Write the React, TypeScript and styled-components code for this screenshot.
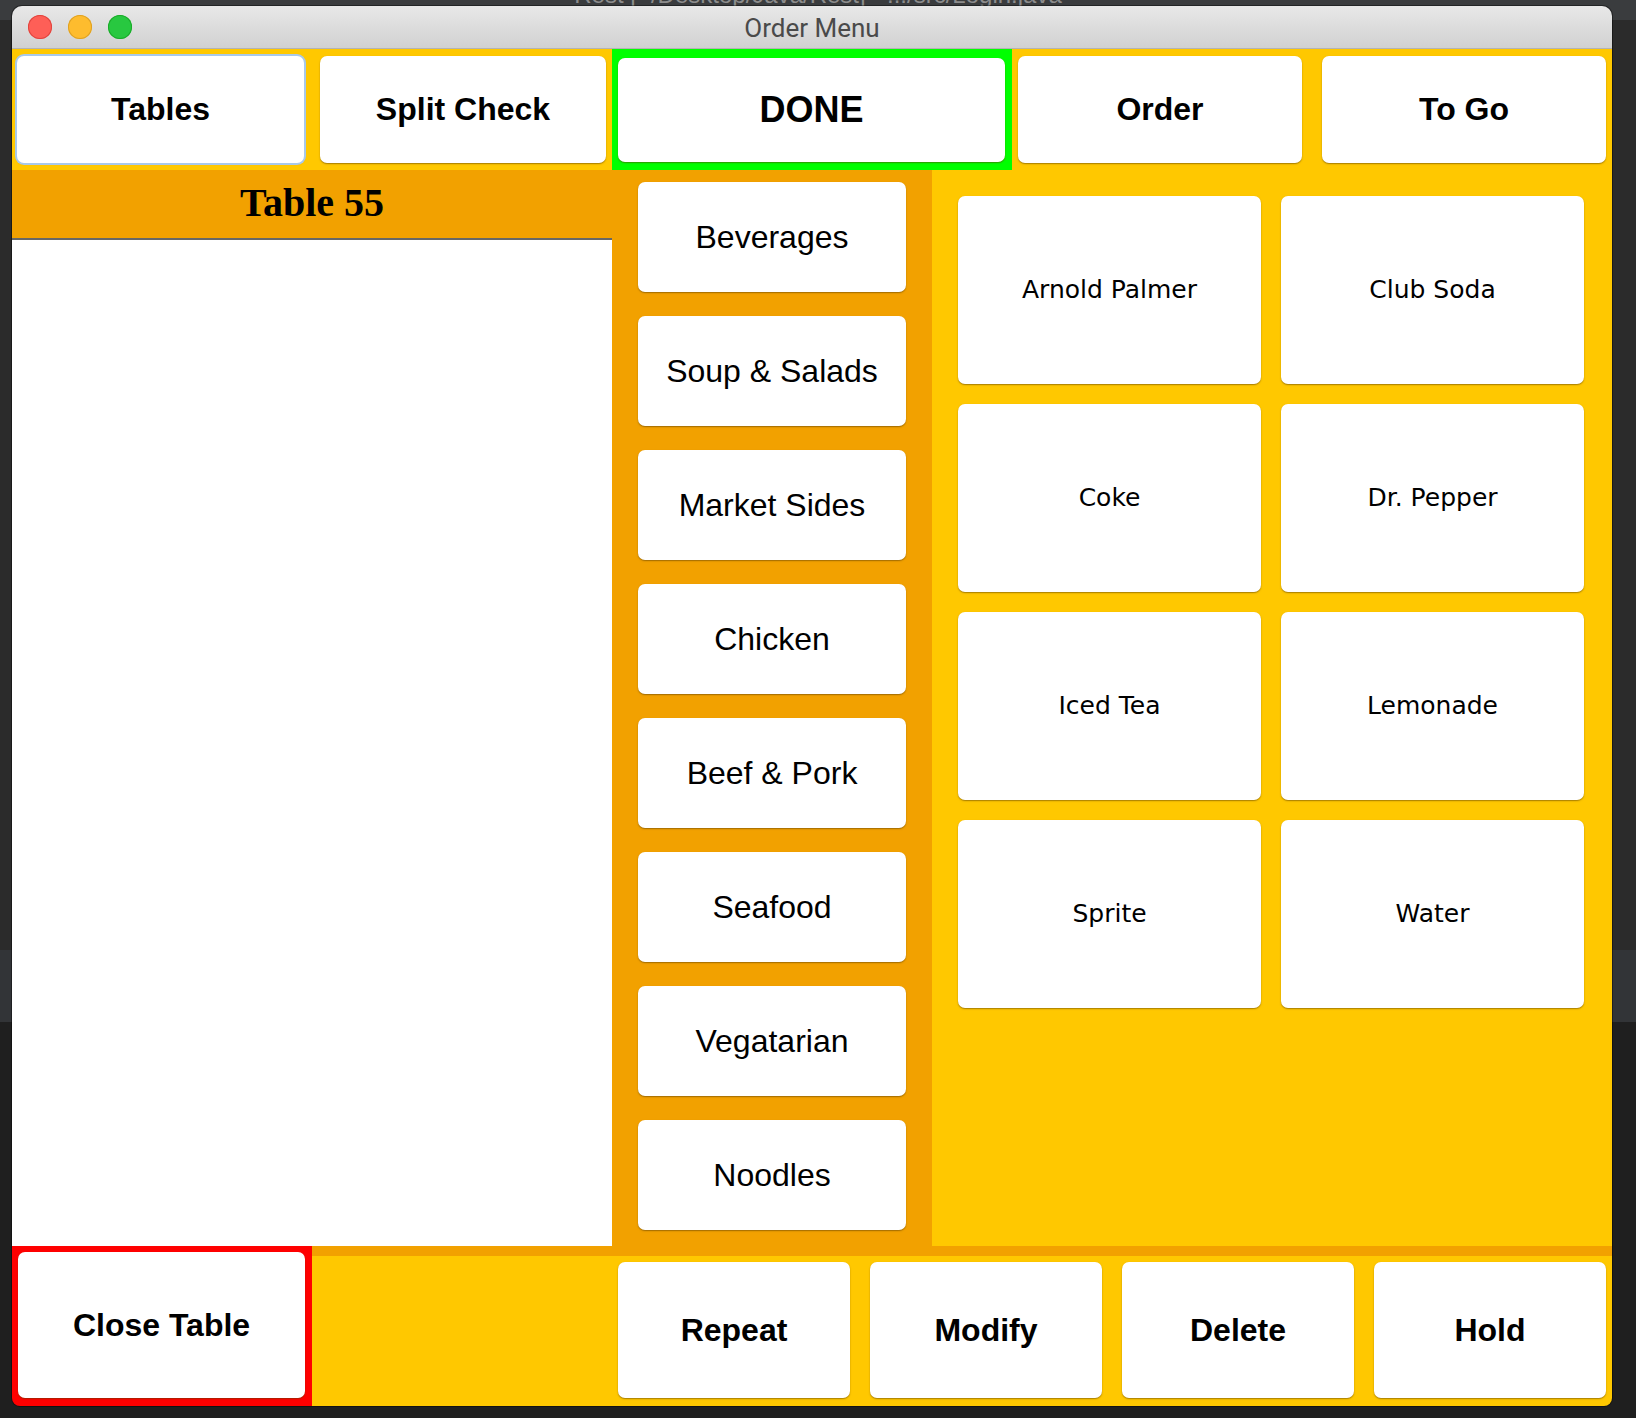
import React from "react";
import styled, { createGlobalStyle, css } from "styled-components";

const YELLOW = "#ffc800";
const ORANGE = "#f2a100";

const GlobalStyle = createGlobalStyle`
  html, body {
    margin: 0;
    padding: 0;
    background: #2b2b2b;
  }
  * {
    box-sizing: border-box;
  }
`;

const Backdrop = styled.div`
  position: relative;
  width: 1636px;
  height: 1418px;
  padding: 6px 24px 12px 12px;
  overflow: hidden;
  background: linear-gradient(
    to bottom,
    #3a3c3e 0px,
    #3a3c3e 20px,
    #2b2b2b 20px,
    #2b2b2b 950px,
    #323437 950px,
    #323437 1022px,
    #1f1f1f 1022px
  );
`;

// IDE window title peeking out above the app window
const IdeTitle = styled.div`
  position: absolute;
  top: -19px;
  left: 0;
  right: 0;
  text-align: center;
  font-family: "Liberation Sans", Arial, sans-serif;
  font-size: 24px;
  line-height: 28px;
  color: #8c8c8c;
`;

const Window = styled.div`
  position: relative;
  z-index: 1;
  width: 1600px;
  height: 1400px;
  display: flex;
  flex-direction: column;
  border-radius: 10px 10px 8px 8px;
  overflow: hidden;
  box-shadow: 0 0 0 1px rgba(0, 0, 0, 0.4);
`;

const TitleBar = styled.div`
  height: 43px;
  flex: none;
  display: grid;
  grid-template-columns: 1fr auto 1fr;
  align-items: center;
  background: linear-gradient(to bottom, #e8e8e8, #d1d1d1);
  border-bottom: 1px solid #b3b3b3;
`;

const Lights = styled.div`
  display: flex;
  gap: 16px;
  padding-left: 16px;
`;

const Light = styled.span<{ $fill: string; $edge: string }>`
  width: 24px;
  height: 24px;
  border-radius: 50%;
  background: ${(p) => p.$fill};
  box-shadow: inset 0 0 0 1px ${(p) => p.$edge};
`;

const WindowTitle = styled.div`
  font-family: Roboto, "Liberation Sans", sans-serif;
  font-size: 26px;
  color: #4a4a4a;
  padding-top: 2px;
`;

const ButtonBase = css`
  display: flex;
  align-items: center;
  justify-content: center;
  background: #fff;
  border: none;
  border-radius: 7px;
  color: #000;
  box-shadow: 0 1px 1.5px rgba(90, 60, 0, 0.55);
  padding: 0;
  cursor: pointer;
`;

const TopRow = styled.div`
  height: 121px;
  flex: none;
  display: grid;
  grid-template-columns: 300px 300px 400px 300px 300px;
  background: ${YELLOW};
`;

const TopButton = styled.button<{ $focused?: boolean; $ml?: number; $mr?: number }>`
  ${ButtonBase}
  margin: 7px ${(p) => p.$mr ?? 6}px 7px ${(p) => p.$ml ?? 6}px;
  font-family: "Liberation Sans", Arial, sans-serif;
  font-weight: bold;
  font-size: 32px;
  ${(p) =>
    p.$focused &&
    css`
      box-shadow: 0 0 0 2px #a8c9ea, 0 1px 1.5px rgba(90, 60, 0, 0.5);
    `}
`;

const DoneCell = styled.div`
  display: flex;
  background: #00ff00;
  padding: 9px 7px 8px 6px;
`;

const DoneButton = styled.button`
  ${ButtonBase}
  flex: 1;
  font-family: "Liberation Sans", Arial, sans-serif;
  font-weight: bold;
  font-size: 36px;
`;

const Middle = styled.div`
  height: 1076px;
  flex: none;
  display: grid;
  grid-template-columns: 600px 320px 680px;
`;

const TicketPanel = styled.div`
  display: flex;
  flex-direction: column;
  background: #fff;
`;

const TicketHeader = styled.div`
  height: 70px;
  flex: none;
  display: flex;
  align-items: center;
  justify-content: center;
  background: ${ORANGE};
  border-bottom: 2px solid #676767;
  font-family: "Liberation Serif", "Times New Roman", serif;
  font-weight: bold;
  font-size: 40px;
  padding-bottom: 4px;
`;

const CategoryColumn = styled.div`
  display: flex;
  flex-direction: column;
  gap: 24px;
  padding: 12px 26px 16px;
  background: ${ORANGE};
`;

const CategoryButton = styled.button`
  ${ButtonBase}
  height: 110px;
  flex: none;
  font-family: "Liberation Sans", Arial, sans-serif;
  font-size: 32px;
`;

const ItemGrid = styled.div`
  display: grid;
  grid-template-columns: 303px 303px;
  grid-auto-rows: 188px;
  gap: 20px;
  align-content: start;
  padding: 26px 28px 0 26px;
  background: ${YELLOW};
`;

const ItemButton = styled.button`
  ${ButtonBase}
  font-family: "DejaVu Sans", Verdana, sans-serif;
  font-size: 25px;
  padding-bottom: 2px;
`;

const BottomRow = styled.div`
  height: 160px;
  flex: none;
  display: grid;
  grid-template-columns: 300px 1300px;
`;

const CloseCell = styled.div`
  display: flex;
  background: #ff0000;
  padding: 6px 7px 8px 6px;
`;

const CloseButton = styled.button`
  ${ButtonBase}
  flex: 1;
  font-family: "Liberation Sans", Arial, sans-serif;
  font-weight: bold;
  font-size: 32px;
`;

const ActionTray = styled.div`
  display: grid;
  grid-template-columns: repeat(4, 1fr);
  gap: 20px;
  padding: 6px 6px 8px 306px;
  background: ${YELLOW};
  border-top: 10px solid ${ORANGE};
`;

const ActionButton = styled.button`
  ${ButtonBase}
  font-family: "Liberation Sans", Arial, sans-serif;
  font-weight: bold;
  font-size: 32px;
`;

const categories = [
  "Beverages",
  "Soup & Salads",
  "Market Sides",
  "Chicken",
  "Beef & Pork",
  "Seafood",
  "Vegatarian",
  "Noodles",
];

const drinks = [
  "Arnold Palmer",
  "Club Soda",
  "Coke",
  "Dr. Pepper",
  "Iced Tea",
  "Lemonade",
  "Sprite",
  "Water",
];

const actions = ["Repeat", "Modify", "Delete", "Hold"];

export default function App() {
  return (
    <>
      <GlobalStyle />
      <Backdrop>
        <IdeTitle>Rest [~/Desktop/Java/Rest] - .../src/Login.java</IdeTitle>
        <Window>
          <TitleBar>
            <Lights>
              <Light $fill="#fe5f57" $edge="#e0443e" />
              <Light $fill="#febc2e" $edge="#dea123" />
              <Light $fill="#28c840" $edge="#1aab29" />
            </Lights>
            <WindowTitle>Order Menu</WindowTitle>
            <div />
          </TitleBar>

          <TopRow>
            <TopButton $focused $ml={5} $mr={8}>
              Tables
            </TopButton>
            <TopButton $ml={8} $mr={6}>
              Split Check
            </TopButton>
            <DoneCell>
              <DoneButton>DONE</DoneButton>
            </DoneCell>
            <TopButton $mr={10}>Order</TopButton>
            <TopButton $ml={10}>To Go</TopButton>
          </TopRow>

          <Middle>
            <TicketPanel>
              <TicketHeader>Table 55</TicketHeader>
            </TicketPanel>
            <CategoryColumn>
              {categories.map((c) => (
                <CategoryButton key={c}>{c}</CategoryButton>
              ))}
            </CategoryColumn>
            <ItemGrid>
              {drinks.map((d) => (
                <ItemButton key={d}>{d}</ItemButton>
              ))}
            </ItemGrid>
          </Middle>

          <BottomRow>
            <CloseCell>
              <CloseButton>Close Table</CloseButton>
            </CloseCell>
            <ActionTray>
              {actions.map((a) => (
                <ActionButton key={a}>{a}</ActionButton>
              ))}
            </ActionTray>
          </BottomRow>
        </Window>
      </Backdrop>
    </>
  );
}
